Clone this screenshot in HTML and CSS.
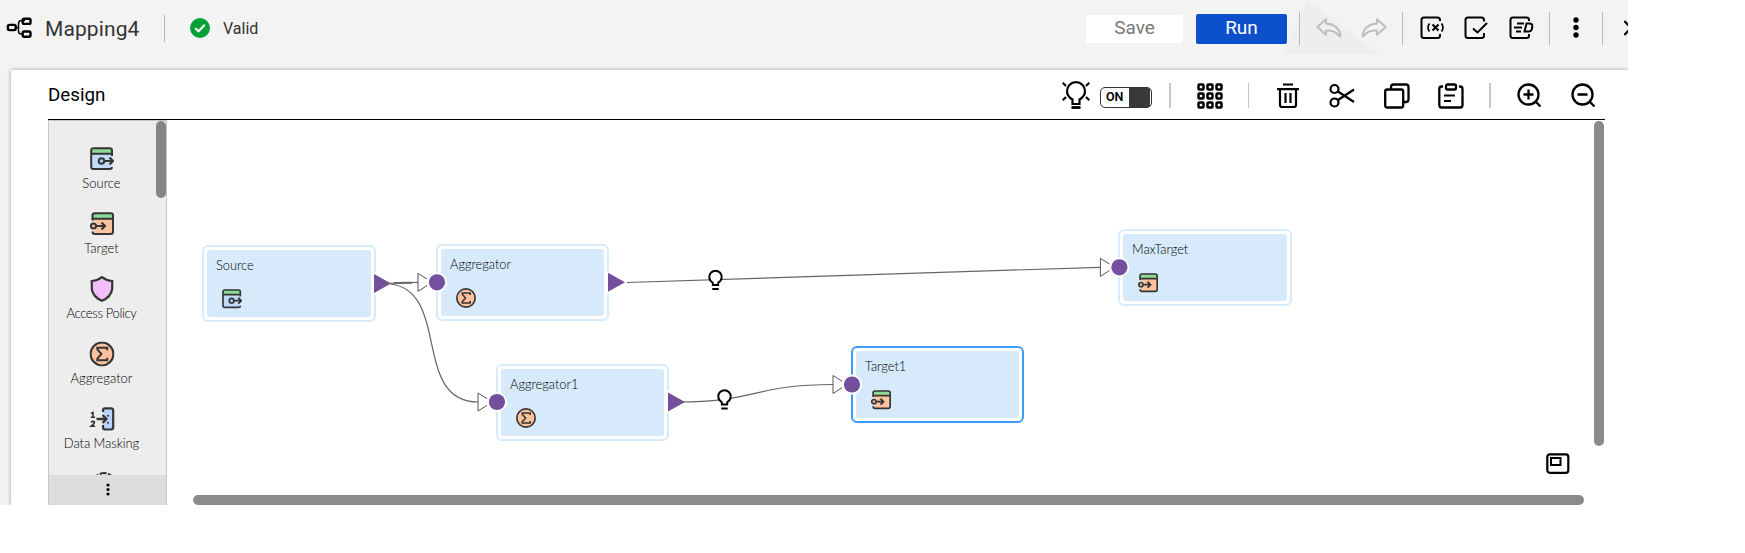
FILE: index.html
```html
<!DOCTYPE html>
<html lang="en">
<head>
<meta charset="utf-8">
<title>Mapping4</title>
<link rel="stylesheet" href="styles.css">
</head>
<body>
<svg class="defs" width="0" height="0">
  <symbol id="i-source" viewBox="0 0 24 24">
    <path d="M1 7V3Q1 1 3 1H20Q22 1 22 3V7Z" fill="#8fd998"/>
    <path d="M1 7H22V21Q22 22 20 22H3Q1 22 1 20Z" fill="#c3dafc"/>
    <path d="M22 9V3.500Q22 1.200 19.700 1.200H3.500Q1.200 1.200 1.200 3.500V19.700Q1.200 22 3.500 22H19.700Q22 22 22 20M1.200 6.700H22" fill="none" stroke="#353535" stroke-width="2"/>
    <path d="M21 9.500H24V19H21Z" class="knock"/>
    <circle cx="11.500" cy="14" r="2.800" fill="#a9c9fa" stroke="#353535" stroke-width="2"/>
    <path d="M14.500 14H22M19.500 10.500L23 14L19.500 17.500" fill="none" stroke="#353535" stroke-width="2.200"/>
  </symbol>
  <symbol id="i-target" viewBox="0 0 24 24">
    <path d="M2.500 7V3Q2.500 1 4.500 1H21Q23 1 23 3V7Z" fill="#8fd998"/>
    <path d="M2.500 7H23V20Q23 22 21 22H4.500Q2.500 22 2.500 20Z" fill="#ffc29c"/>
    <path d="M2.500 8.500V3.500Q2.500 1.200 4.800 1.200H20.700Q23 1.200 23 3.500V19.700Q23 22 20.700 22H4.800Q2.500 22 2.500 19.500M2.500 6.700H23" fill="none" stroke="#353535" stroke-width="2"/>
    <circle cx="3" cy="14" r="4.700" class="knock"/>
    <circle cx="3.500" cy="14" r="2.600" fill="#ffb080" stroke="#353535" stroke-width="2"/>
    <path d="M6.500 14H14.500M11.500 10.500L15 14L11.500 17.500" fill="none" stroke="#353535" stroke-width="2.200"/>
  </symbol>
  <symbol id="i-agg" viewBox="0 0 24 24">
    <circle cx="12" cy="12" r="11" fill="#ffc29c" stroke="#353535" stroke-width="2"/>
    <path d="M17 8.500V6H7.500V7.500L11.500 12L7.500 16.500V18H17V15.500" fill="none" stroke="#353535" stroke-width="1.900"/>
  </symbol>
  <symbol id="i-bulb" viewBox="0 0 16 22">
    <path d="M5.300 15.500V13.300C3 11.800 1.800 9.900 1.800 7.400A6.200 6.200 0 0 1 14.200 7.400C14.200 9.900 13 11.800 10.700 13.300V15.500Z" class="bulbglass" stroke="#000" stroke-width="1.900"/>
    <path d="M4.800 19.500H11.200" stroke="#000" stroke-width="1.800"/>
  </symbol>
</svg>

<div class="app">
  <svg class="watermark" width="96" height="54" viewBox="0 0 96 54"><path d="M23 0L95 54H0Z" fill="#eee"/></svg>
  <header class="header">
    <svg class="logo" width="26" height="22" viewBox="0 0 26 22" fill="none" stroke="#000">
      <path d="M9 10.500H13M19 3.500H15.500Q12.500 3.500 12.500 7V14Q12.500 17 15.500 17H17" stroke-width="1.500"/>
      <rect x="1.900" y="7.900" width="7.800" height="5.200" rx="1.500" stroke-width="2.400"/>
      <rect x="16.700" y="1.700" width="7.800" height="5.200" rx="1.500" stroke-width="2.400"/>
      <rect x="16.700" y="14.500" width="7.800" height="5.200" rx="1.500" stroke-width="2.400"/>
    </svg>
    <h1 class="title">Mapping4</h1>
    <i class="sep sep-title"></i>
    <svg class="check" width="20" height="20" viewBox="0 0 20 20"><circle cx="10" cy="10" r="10" fill="#05a136"/><path d="M5.300 10.300L8.600 13.300L14.700 6.700" fill="none" stroke="#fff" stroke-width="2"/></svg>
    <span class="status">Valid</span>
    <div class="actions">
      <button class="btn save">Save</button>
      <button class="btn run">Run</button>
      <i class="sep"></i>
      <svg class="undo" width="26" height="20" viewBox="0 0 26 20"><path d="M10 1.200L1.300 9L10 16.700V12.600C16 12 20 13.500 23.700 18.300Q24.500 18.500 24.500 17C23.500 10.500 18 6 10 5.500Z" fill="none" stroke="#bdbdbd" stroke-width="1.900" stroke-linejoin="round"/></svg>
      <svg class="redo" width="26" height="20" viewBox="0 0 26 20"><path d="M16 1.200L24.700 9L16 16.700V12.600C10 12 6 13.500 2.300 18.300Q1.500 18.500 1.500 17C2.500 10.500 8 6 16 5.500Z" fill="none" stroke="#bdbdbd" stroke-width="1.900" stroke-linejoin="round"/></svg>
      <i class="sep"></i>
      <svg class="h-param" width="25" height="24" viewBox="0 0 25 24" fill="none" stroke="#000" stroke-width="2">
        <path d="M20 5V4Q20 1.500 17.500 1.500H4Q1.500 1.500 1.500 4V19.500Q1.500 22 4 22H17.500Q20 22 20 19.500V18"/>
        <path d="M9.500 7.500Q6.500 11.500 9.500 15.500M21.500 7.500Q24.500 11.500 21.500 15.500" stroke-width="1.700"/>
        <path d="M12.500 8.500L18.500 14.500M18.500 8.500L12.500 14.500"/>
      </svg>
      <svg class="h-valid" width="25" height="24" viewBox="0 0 25 24" fill="none" stroke="#000" stroke-width="2">
        <path d="M20 5.500V4Q20 1.500 17.500 1.500H4Q1.500 1.500 1.500 4V19.500Q1.500 22 4 22H17.500Q20 22 20 19.500V17"/><path d="M9 12.500L13.500 16.500L23 7"/>
      </svg>
      <svg class="h-note" width="25" height="24" viewBox="0 0 25 24" fill="none" stroke="#000" stroke-width="2">
        <path d="M20 5V4Q20 1.500 17.500 1.500H4Q1.500 1.500 1.500 4V19.500Q1.500 22 4 22H17.500Q20 22 20 19.500V18"/>
        <path d="M8 7.500H15M5 11.500H13M7 15.500H12"/><path d="M17.500 7.500H20.500Q23.500 7.500 23.300 10.500Q23 15.500 20 15.500H15.500Z"/>
      </svg>
      <i class="sep"></i>
      <svg class="more" width="6" height="22" viewBox="0 0 6 22"><circle cx="3" cy="3" r="2.700"/><circle cx="3" cy="10.500" r="2.700"/><circle cx="3" cy="18" r="2.700"/></svg>
      <i class="sep"></i>
      <svg class="close" width="4" height="16" viewBox="0 0 4 16"><path d="M.3 1L7 8L.3 15" fill="none" stroke="#000" stroke-width="2.200"/></svg>
    </div>
  </header>

  <main class="panel">
    <div class="toolbar">
      <h2 class="heading">Design</h2>
      <div class="tools">
        <svg class="t-bulb" width="28" height="29" viewBox="0 0 28 29" fill="none" stroke="#000" stroke-width="2.200">
          <path d="M10.500 23V18.500C7 16.500 5 14 5 10.200A9 9 0 0 1 23 10.200C23 14 21 16.500 17.500 18.500V23Z"/><path d="M9.500 26.500H18.500" stroke-width="2.800"/>
          <path d="M.7 1.700L4 5M27.300 1.700L24 5M.7 19.300L4 16M27.300 19.300L24 16"/>
        </svg>
        <div class="toggle"><span class="on">ON</span><span class="knob"></span></div>
        <i class="tsep s1"></i>
        <svg class="t-grid" width="26" height="26" viewBox="0 0 26 26" fill="none" stroke="#000" stroke-width="2.500">
          <g id="gr"><rect x="1.500" y="1.500" width="5" height="5" rx="1"/><rect x="10.500" y="1.500" width="5" height="5" rx="1"/><rect x="19.500" y="1.500" width="5" height="5" rx="1"/></g>
          <use href="#gr" y="9"/><use href="#gr" y="18"/>
        </svg>
        <i class="tsep s2"></i>
        <svg class="t-trash" width="22" height="26" viewBox="0 0 22 26" fill="none" stroke="#000" stroke-width="2.200">
          <path d="M6 1.500H16M0 6.200H22M3 6V22Q3 24 5 24H17Q19 24 19 22V6M8.500 10V20M13.500 10V20"/>
        </svg>
        <svg class="t-cut" width="26" height="26" viewBox="0 0 26 26" fill="none" stroke="#000" stroke-width="2.200">
          <circle cx="5.500" cy="6" r="4"/><circle cx="5.500" cy="19.500" r="4"/><path d="M9 8.500L25 19M9 17L25 6.500"/>
        </svg>
        <svg class="t-copy" width="26" height="26" viewBox="0 0 26 26" fill="none" stroke="#000" stroke-width="2.300">
          <rect x="1.200" y="6.500" width="18" height="18" rx="2"/><path d="M7 6V4Q7 1.500 9.500 1.500H22Q24.500 1.500 24.500 4V16.500Q24.500 19 22 19H20"/>
        </svg>
        <svg class="t-paste" width="26" height="26" viewBox="0 0 26 26" fill="none" stroke="#000" stroke-width="2.300">
          <path d="M5 3.500H3.500Q1.300 3.500 1.300 6V22Q1.300 24.500 3.500 24.500H22Q24.500 24.500 24.500 22V6Q24.500 3.500 22 3.500H21"/><rect x="8" y="1.500" width="10" height="5" rx="1.500"/><path d="M6 12.500H17M6 18H13" stroke-width="2"/>
        </svg>
        <i class="tsep s3"></i>
        <svg class="t-zin" width="25" height="25" viewBox="0 0 25 25" fill="none" stroke="#000" stroke-width="2.300">
          <circle cx="11.500" cy="11.500" r="10"/><path d="M11.500 6.500V16.500M6.500 11.500H16.500M18.500 18.500L23.500 23.500"/>
        </svg>
        <svg class="t-zout" width="25" height="25" viewBox="0 0 25 25" fill="none" stroke="#000" stroke-width="2.300">
          <circle cx="11.500" cy="11.500" r="10"/><path d="M6.500 11.500H16.500M18.500 18.500L23.500 23.500"/>
        </svg>
      </div>
    </div>

    <div class="workspace">
      <aside class="palette">
        <div class="list">
          <div class="item"><svg width="26" height="26" viewBox="-1 -1 26 26"><use href="#i-source" width="24" height="24"/></svg><span>Source</span></div>
          <div class="item"><svg width="26" height="26" viewBox="-1 -1 26 26"><use href="#i-target" width="24" height="24"/></svg><span>Target</span></div>
          <div class="item"><svg width="26" height="26" viewBox="-1 0 26 26"><path d="M12 .2Q17 4 22.200 4V12Q21 20 12 23.800Q3 20 1.800 12V4Q7 4 12 .2Z" transform="translate(0 1)" fill="#f2bffb" stroke="#353535" stroke-width="2.200"/></svg><span class="tight">Access Policy</span></div>
          <div class="item"><svg width="26" height="26" viewBox="-.500 -.500 25 25"><use href="#i-agg" width="24" height="24"/></svg><span>Aggregator</span></div>
          <div class="item"><svg width="26" height="26" viewBox="-1 -1 26 26" fill="none" stroke="#353535">
            <path d="M13 5V3.500Q13 1.300 15 1.300H21Q23.200 1.300 23.200 3.500V20Q23.200 22.500 21 22.500H15Q13 22.500 13 20V18" fill="#b9d4fc" stroke-width="2.200"/>
            <path d="M12 6H14V17H12Z" fill="#ededed" stroke="none"/>
            <path d="M6.500 12H16M12.500 8L16.500 12L12.500 16" stroke-width="2.300"/><path d="M18 8V9.500M18 15V16.500" stroke-width="2"/>
            <path d="M1 6.500L3 5.500V10M.8 10.200H5M1 15.300Q3 13.500 4.500 15Q4.500 16.500 1.200 19.200H5.200" stroke-width="1.600"/></svg><span class="wide">Data Masking</span></div>
          <div class="item"><svg width="26" height="26" viewBox="-1 -1 26 26"><circle cx="14" cy="11" r="10" fill="none" stroke="#353535" stroke-width="2.200" stroke-dasharray="7 1.500"/></svg></div>
        </div>
        <div class="thumb"></div>
        <div class="palette-foot"><svg width="4" height="16" viewBox="0 0 4 16"><circle cx="2" cy="3" r="1.600"/><circle cx="2" cy="7.500" r="1.600"/><circle cx="2" cy="12" r="1.600"/></svg></div>
      </aside>

      <section class="canvas">
        <div class="node n-source"><span>Source</span><svg width="20" height="20"><use href="#i-source"/></svg></div>
        <div class="node n-agg"><span>Aggregator</span><svg width="20" height="20" viewBox="0 0 24 24"><use href="#i-agg" width="24" height="24"/></svg></div>
        <div class="node n-agg1"><span>Aggregator1</span><svg width="20" height="20" viewBox="0 0 24 24"><use href="#i-agg" width="24" height="24"/></svg></div>
        <div class="node n-target1"><span>Target1</span><svg width="20" height="20"><use href="#i-target"/></svg></div>
        <div class="node n-max"><span>MaxTarget</span><svg width="20" height="20"><use href="#i-target"/></svg></div>

        <svg class="links" width="1461" height="385" viewBox="167 120 1461 385">
          <defs>
            <g id="in"><circle r="10" fill="#fff"/><path d="M-10 -3.300L-19 -9V9L-10 3.300" fill="none" stroke="#555"/><circle r="8.100" fill="#734f9e"/></g>
            <g id="out"><path d="M-1 -11.500H2V11.500H-1Z" fill="#fff"/><path d="M0 -9.500L17 0L0 9.500Z" fill="#734f9e"/></g>
          </defs>
          <use href="#out" x="374" y="283.500"/><use href="#out" x="608" y="282.300"/><use href="#out" x="668" y="402"/>
          <g fill="none" stroke="#666" stroke-width="1.200">
            <path d="M384 283.500L418 282.300"/><path d="M394 283L412 282.800" stroke-width="2"/>
            <path d="M384 283.500C453 283.500 410 402 478 402"/>
            <path d="M627 282.500L1100 267.300"/>
            <path d="M678 402C755 402 755 384.500 833 384.500"/>
          </g>
          <use href="#in" x="437" y="282.300"/><use href="#in" x="497" y="402"/><use href="#in" x="852" y="384.500"/><use href="#in" x="1119.400" y="267.300"/>
          <use href="#i-bulb" x="707.500" y="269.500" width="16" height="22"/><use href="#i-bulb" x="716.500" y="389" width="16" height="22"/>
        </svg>
        <svg class="minimap" width="24" height="22" viewBox="0 0 24 22" fill="none" stroke="#000"><rect x="1.300" y="1.300" width="21" height="18.500" rx="2.500" stroke-width="2.200"/><rect x="5" y="5" width="9.500" height="7" stroke-width="2"/></svg>
        <div class="vscroll"></div>
        <div class="hscroll"></div>
      </section>
    </div>
  </main>
</div>
</body>
</html>
```

FILE: styles.css
```css
* { box-sizing: border-box; }
body { margin: 0; background: #fff; font-family: Roboto, sans-serif; color: #000; }
h1, h2 { margin: 0; font-weight: 400; }
svg { display: block; flex: none; }
.defs { position: absolute; }
.app { position: relative; width: 1628px; height: 505px; background: #f3f3f3; overflow: hidden; display: flex; flex-direction: column; }
.watermark { position: absolute; left: 1284px; top: 0; }

.header { position: relative; height: 70px; flex: none; display: flex; align-items: center; padding: 0 0 14px 6px; }
.title { margin-left: 13px; width: 104px; font-size: 21px; line-height: 28px; letter-spacing: .1px; color: #333; padding-top: 1px; }
.sep { width: 1px; height: 33px; background: #b9b9b9; flex: none; }
.sep-title { margin-left: 15px; height: 27px; }
.check { margin-left: 25px; }
.status { margin-left: 13px; font-size: 16px; color: #333; }
.actions { margin-left: auto; display: flex; align-items: center; }
.btn { border: 0; padding: 0 0 3px; font: 19px/24px Roboto, sans-serif; border-radius: 2px; }
.save { width: 97px; height: 28px; background: #fff; color: #777; margin: 2px 13px 0 0; }
.run { width: 91px; height: 30px; background: #0b50ca; color: #fff; margin: 2px 12px 0 0; }
.undo { margin-left: 16px; }
.redo { margin: 0 15px 0 19px; }
.h-param { margin-left: 17px; }
.h-valid { margin-left: 19px; }
.h-note { margin: 0 15px 0 20px; }
.more { margin: 0 23px; }
.close { margin-left: 21px; }

.panel { flex: 1; margin-left: 11px; background: #fff; box-shadow: 0 0 4px rgba(0,0,0,.35); padding: 0 0 0 37px; display: flex; flex-direction: column; position: relative; }
.toolbar { height: 50px; width: 1557px; border-bottom: 1px solid #000; display: flex; align-items: center; }
.heading { font-size: 18.800px; line-height: 24px; padding-top: 1px; }
.tools { margin-left: auto; display: flex; align-items: center; padding: 2px 9px 0 0; }
.toggle { margin-left: 10px; width: 52px; height: 21px; border: 1px solid #333; border-radius: 5px; display: flex; overflow: hidden; background: #fff; margin-top: 3px; }
.on { width: 28px; font-size: 12.500px; line-height: 18px; font-weight: 600; padding-left: 5px; }
.knob { width: 21px; background: #393939; }
.tsep { width: 1px; height: 25px; background: #c6c6c6; }
.s1 { width: 2px; margin: 0 26px 0 17px; }
.s2 { margin: 0 28px 0 25px; }
.s3 { width: 2px; margin: 0 26px 0 25px; }
.t-cut { margin-left: 30px; }
.t-copy { margin-left: 29px; }
.t-paste { margin-left: 28px; }
.t-zout { margin-left: 29px; }

.workspace { flex: 1; display: flex; min-height: 0; }
.palette { position: relative; width: 119px; background: #ededed; border: 1px solid #c6c6c6; border-bottom: 0; display: flex; flex-direction: column; flex: none; }
.list { height: 354px; padding-top: 25px; overflow: hidden; width: 105px; }
.item { height: 65px; display: flex; flex-direction: column; align-items: center; font: 300 13px/18px Lato, sans-serif; white-space: nowrap; }
.item span { margin-top: 2px; }
.item .tight { letter-spacing: -.35px; }
.item .wide { letter-spacing: -.1px; }
.item .knock { fill: #ededed; }
.knock { fill: #d6eafb; }
.thumb { position: absolute; right: 0; top: 0; width: 10px; height: 77px; border-radius: 5px; background: #858585; }
.palette-foot { flex: 1; background: #ddd; display: flex; justify-content: center; padding-top: 7px; }

.canvas { position: relative; flex: 1; }
.node { position: absolute; width: 173px; height: 77px; border: 2px solid #d6ebfc; border-radius: 6px; padding: 3px; background: #fff; }
.node::before { content: ""; position: absolute; inset: 3px; border-radius: 3px; background: #d6eafb; }
.node span { position: relative; display: block; margin: 7px 0 0 9px; font: 300 12.800px/16px Lato, sans-serif; color: #000; }
.node svg { position: relative; margin: 16px 0 0 15px; }
.n-source { left: 35px; top: 125px; width: 174px; }
.n-agg { left: 269px; top: 124px; }
.n-agg1 { left: 329px; top: 244px; }
.n-target1 { left: 684px; top: 226px; border-color: #3b9cfb; }
.n-max { left: 951px; top: 109px; width: 174px; }
.links { position: absolute; left: 0; top: 0; pointer-events: none; }
.bulbglass { fill: #fff; }
.minimap { position: absolute; left: 1379px; top: 333px; }
.vscroll { position: absolute; left: 1427px; top: 1px; width: 10px; height: 325px; border-radius: 5px; background: #8b8b8b; }
.hscroll { position: absolute; left: 26px; top: 375px; width: 1391px; height: 10px; border-radius: 5px; background: #8b8b8b; }
```
